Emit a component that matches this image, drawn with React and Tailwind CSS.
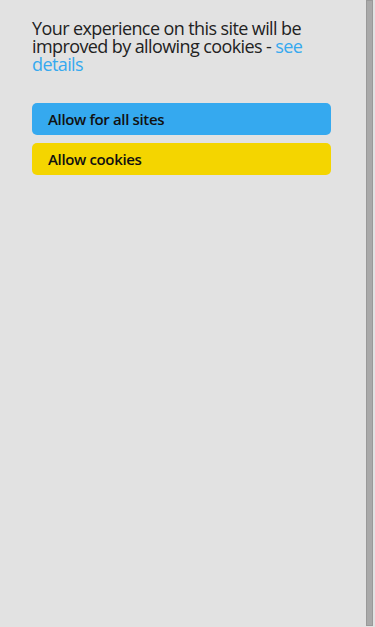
import React from 'react'

export default function App() {
  return (
    <div className="flex h-[627px] w-[375px] bg-[#e2e2e2] font-['Open_Sans',sans-serif]">
      <div className="w-[366px] pl-8 pt-[19px]">
        <p className="w-[299px] text-[18px] leading-[18px] tracking-[-0.6px] text-[#222]">
          Your experience on this site will be improved by allowing cookies -{' '}
          <a href="#" className="text-[#35a9ef]">see details</a>
        </p>
        <div className="mt-[30px] flex w-[299px] flex-col gap-2">
          <button className="h-8 rounded-[5px] bg-[#35a9ef] px-4 text-left text-[15px] font-semibold tracking-[-0.35px] text-[#111]">
            Allow for all sites
          </button>
          <button className="h-8 rounded-[5px] bg-[#f4d500] px-4 text-left text-[15px] font-semibold tracking-[-0.35px] text-[#111]">
            Allow cookies
          </button>
        </div>
      </div>
      {/* scrollbar */}
      <div className="h-[626px] w-[7px] border border-[#999] bg-[#a9a9a9]" />
    </div>
  )
}
